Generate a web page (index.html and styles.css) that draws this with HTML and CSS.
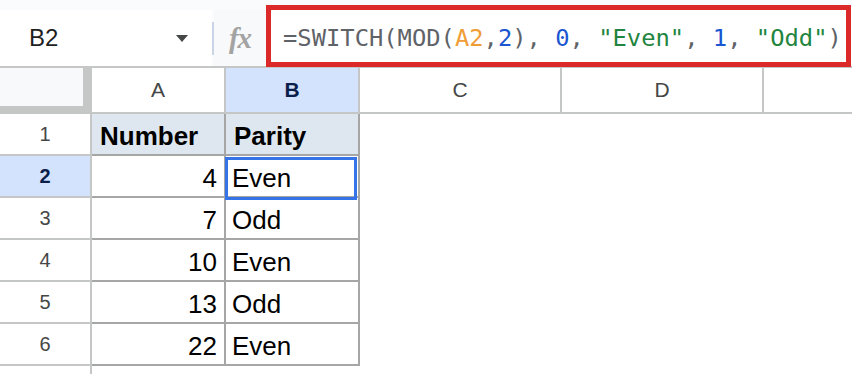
FILE: index.html
```html
<!DOCTYPE html>
<html lang="en">
<head>
    <meta charset="UTF-8">
    <meta name="viewport" content="width=device-width, initial-scale=1.0">
    <title>SWITCH parity sheet</title>
    <link rel="stylesheet" href="styles.css">
</head>
<body>
    <div class="formula-bar">
        <div class="name-box">
            <span class="cell-ref">B2</span>
            <span class="caret"></span>
        </div>
        <div class="divider"></div>
        <div class="fx">fx</div>
        <div class="formula"><span class="fn">=SWITCH(MOD(</span><span class="ref">A2</span><span class="fn">,</span><span class="num">2</span><span class="fn">), </span><span class="num">0</span><span class="fn">, </span><span class="str">"Even"</span><span class="fn">, </span><span class="num">1</span><span class="fn">, </span><span class="str">"Odd"</span><span class="fn">)</span></div>
    </div>

    <div class="sheet">
        <div class="corner"></div>
        <div class="col-head">A</div>
        <div class="col-head active">B</div>
        <div class="col-head">C</div>
        <div class="col-head">D</div>
        <div class="col-head last"></div>

        <div class="row-head">1</div>
        <div class="cell title">Number</div>
        <div class="cell title">Parity</div>
        <div class="blank"></div><div class="blank"></div><div class="blank"></div>

        <div class="row-head active">2</div>
        <div class="cell value">4</div>
        <div class="cell selected">Even</div>
        <div class="blank"></div><div class="blank"></div><div class="blank"></div>

        <div class="row-head">3</div>
        <div class="cell value">7</div>
        <div class="cell">Odd</div>
        <div class="blank"></div><div class="blank"></div><div class="blank"></div>

        <div class="row-head">4</div>
        <div class="cell value">10</div>
        <div class="cell">Even</div>
        <div class="blank"></div><div class="blank"></div><div class="blank"></div>

        <div class="row-head">5</div>
        <div class="cell value">13</div>
        <div class="cell">Odd</div>
        <div class="blank"></div><div class="blank"></div><div class="blank"></div>

        <div class="row-head">6</div>
        <div class="cell value">22</div>
        <div class="cell">Even</div>
        <div class="blank"></div><div class="blank"></div><div class="blank"></div>

        <div class="row-head cut"></div>
        <div class="blank"></div><div class="blank"></div><div class="blank"></div><div class="blank"></div><div class="blank"></div>
    </div>
</body>
</html>
```

FILE: styles.css
```css
body {
    margin: 0;
    width: 852px;
    height: 374px;
    overflow: hidden;
    background-color: #ffffff;
    font-family: "Liberation Sans", Arial, sans-serif;
}

/* formula bar */

.formula-bar {
    display: flex;
    height: 68px;
    padding-top: 10px;
    box-sizing: border-box;
    background-color: #f9fbfd;
    border-bottom: 2px solid #c4c7c5;
}

.name-box {
    width: 212px;
    display: flex;
    align-items: center;
    padding-left: 29px;
    box-sizing: border-box;
    background-color: #ffffff;
}

.cell-ref {
    font-size: 24px;
    color: #1f1f1f;
}

.caret {
    margin-left: auto;
    margin-right: 24px;
    width: 0;
    height: 0;
    border-left: 6px solid transparent;
    border-right: 6px solid transparent;
    border-top: 7px solid #444746;
}

.divider {
    width: 2px;
    height: 33px;
    align-self: center;
    background-color: #c9d5e6;
}

.fx {
    width: 52px;
    display: flex;
    align-items: center;
    justify-content: center;
    background-color: #f8f9fa;
    font-family: "Liberation Serif", serif;
    font-style: italic;
    font-weight: bold;
    font-size: 29px;
    color: #a3a3a3;
    letter-spacing: -1px;
}

.formula {
    flex: 1;
    position: relative;
    display: flex;
    align-items: center;
    padding-left: 17px;
    background-color: #ffffff;
    font-family: "DejaVu Sans Mono", monospace;
    font-size: 23.8px;
    white-space: pre;
}

.formula::after {
    content: "";
    position: absolute;
    top: -5px;
    left: 0;
    right: 1px;
    bottom: -1px;
    border: 5px solid #db2828;
}

.fn { color: #5f6368; }
.ref { color: #f09d38; }
.num { color: #1a56d0; }
.str { color: #1f8540; }

/* grid */

.sheet {
    display: grid;
    grid-template-columns: 92px 134px 134px 202px 202px 1fr;
    grid-template-rows: 46px repeat(6, 42px) 8px;
}

.sheet > div {
    box-sizing: border-box;
}

.corner {
    background-color: #f8f9fa;
    border-right: 9px solid #c4c7c5;
    border-bottom: 8px solid #c4c7c5;
}

.col-head {
    display: flex;
    align-items: center;
    justify-content: center;
    font-size: 21px;
    color: #444746;
    border-right: 2px solid #c4c7c5;
    border-bottom: 2px solid #c4c7c5;
}

.col-head.last {
    border-right: none;
}

.row-head {
    display: flex;
    align-items: center;
    justify-content: center;
    font-size: 20px;
    color: #444746;
    border-right: 2px solid #c4c7c5;
    border-bottom: 2px solid #c4c7c5;
}

.row-head.cut {
    border-bottom: none;
}

.col-head.active,
.row-head.active {
    background-color: #d3e3fd;
    color: #0b1f4b;
    font-weight: bold;
}

.cell {
    display: flex;
    align-items: flex-end;
    padding: 0 6px 3px 6px;
    font-size: 26px;
    line-height: 30px;
    color: #000000;
    border-right: 2px solid #a6a6a6;
    border-bottom: 2px solid #a6a6a6;
}

.cell.value {
    justify-content: flex-end;
    padding-right: 7px;
}

.cell.title {
    background-color: #dee6ef;
    font-weight: bold;
    padding-left: 8px;
}

.cell.selected {
    position: relative;
}

.cell.selected::after {
    content: "";
    position: absolute;
    top: 1px;
    left: -1px;
    right: 1px;
    bottom: -4px;
    border: 3px solid #3574e8;
}
```
